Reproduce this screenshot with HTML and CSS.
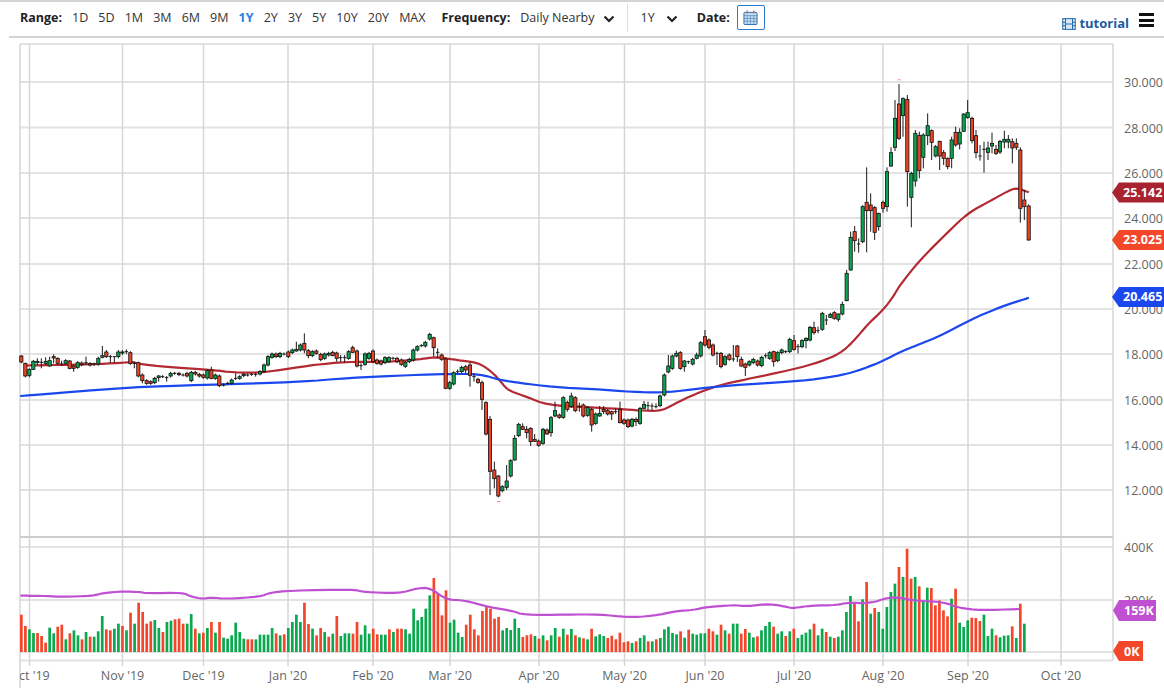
FILE: index.html
```html
<!DOCTYPE html>
<html lang="en">
<head>
<meta charset="utf-8">
<title>Chart</title>
<link rel="stylesheet" href="styles.css">
</head>
<body>
<header class="toolbar">
  <span class="lbl">Range:</span>
  <nav class="ranges">
    <a>1D</a><a>5D</a><a>1M</a><a>3M</a><a>6M</a><a>9M</a><a class="on">1Y</a><a>2Y</a><a>3Y</a><a>5Y</a><a>10Y</a><a>20Y</a><a>MAX</a>
  </nav>
  <span class="lbl freq">Frequency:</span>
  <span class="sel">Daily Nearby</span>
  <svg class="chev" viewBox="0 0 12 8"><path d="M1.5 1.5 6 6l4.5-4.5"/></svg>
  <span class="sep"></span>
  <span class="sel">1Y</span>
  <svg class="chev chev2" viewBox="0 0 12 8"><path d="M1.5 1.5 6 6l4.5-4.5"/></svg>
  <span class="lbl date">Date:</span>
  <button class="cal" type="button" aria-label="Pick date">
    <svg viewBox="0 0 16 17" class="calicon">
      <rect class="calbg" x="1" y="3" width="14" height="13"/>
      <path class="calgrid" d="M1 6.5h14M1 9.5h14M1 12.5h14M4.5 6v10M8 6v10M11.500 6v10"/>
      <rect class="calout" x="1" y="3" width="14" height="13" rx="1"/>
      <path class="calring" d="M4.500 1v3.500M11.500 1v3.500"/>
    </svg>
  </button>
  <span class="tools">
    <a class="tutorial">
      <svg class="film" viewBox="0 0 15 13"><rect x=".7" y=".7" width="13.600" height="11.600"/><path d="M3.700 .7v11.600M11.300 .7v11.600M.7 4.500h3M.7 8.500h3M11.300 4.500h3M11.300 8.500h3M3.700 6.500h7.600"/></svg>
      <span>tutorial</span>
    </a>
    <span class="burger"><i></i><i></i><i></i></span>
  </span>
</header>
<main class="chartwrap">
<svg class="chart" viewBox="0 38 1164 662" width="1164" height="662">
  <defs>
    <clipPath id="axisclip"><rect x="20" y="662" width="1100" height="30"/></clipPath>
  </defs>
  <g class="hgrid">
    <path d="M20 44H1113M20 82H1113M20 127.500H1113M20 173H1113M20 218H1113M20 264H1113M20 309H1113M20 354H1113M20 400H1113M20 445H1113M20 490H1113M20 547H1113M20 600H1113M20 652H1113M20 660.500H1113"/>
  </g>
  <g class="vgrid">
    <path d="M20 44V688M29.500 44V666M122.500 44V666M203.500 44V666M288 44V666M373 44V666M450 44V666M539 44V666M624.500 44V666M705 44V666M794 44V666M883 44V666M968 44V666M1061 44V666M1113 44V660"/>
  </g>
  <path class="sepline" d="M20 537H1113"/>
  <g id="vol"></g>
  <polyline id="mavol" class="ma purple"/>
  <polyline id="ma50" class="ma red"/>
  <polyline id="ma200" class="ma blue"/>
  <g id="candles"></g>
  <path class="tick" d="M897.800 80.500l1.500-1.500 1.500 1.500M497 501.500h3.500"/>
  <g class="yaxis">
    <text x="1124" y="87">30.000</text>
    <text x="1124" y="132.500">28.000</text>
    <text x="1124" y="178">26.000</text>
    <text x="1124" y="223">24.000</text>
    <text x="1124" y="269">22.000</text>
    <text x="1124" y="314">20.000</text>
    <text x="1124" y="359">18.000</text>
    <text x="1124" y="405">16.000</text>
    <text x="1124" y="450">14.000</text>
    <text x="1124" y="495">12.000</text>
    <text x="1124" y="552">400K</text>
    <text x="1124" y="605">200K</text>
  </g>
  <g class="xaxis" clip-path="url(#axisclip)">
    <text x="29.500" y="680">Oct '19</text>
    <text x="122.500" y="680">Nov '19</text>
    <text x="203.500" y="680">Dec '19</text>
    <text x="288" y="680">Jan '20</text>
    <text x="373" y="680">Feb '20</text>
    <text x="450" y="680">Mar '20</text>
    <text x="539" y="680">Apr '20</text>
    <text x="624.500" y="680">May '20</text>
    <text x="705" y="680">Jun '20</text>
    <text x="794" y="680">Jul '20</text>
    <text x="883" y="680">Aug '20</text>
    <text x="968" y="680">Sep '20</text>
    <text x="1061" y="680">Oct '20</text>
  </g>
  <g class="tags">
    <path class="t-red" d="M1112 192.500l7-10h45v20h-45z"/>
    <text x="1123" y="196.500">25.142</text>
    <path class="t-orange" d="M1112 240l7-10h45v20h-45z"/>
    <text x="1123" y="244">23.025</text>
    <path class="t-blue" d="M1112 297l7-10h45v20h-45z"/>
    <text x="1123" y="301">20.465</text>
    <path class="t-purple" d="M1113 610.500l6-10.500h37v21h-37z"/>
    <text x="1124" y="614.500">159K</text>
    <path class="t-orange" d="M1113 651l6-10h24v20h-24z"/>
    <text x="1124" y="655.500">0K</text>
  </g>
</svg>
</main>
<script src="chart.js"></script>
</body>
</html>
```
FILE: styles.css
```css
* { box-sizing: border-box; }
html, body { margin: 0; padding: 0; background: #fff; }
body { width: 1164px; height: 700px; overflow: hidden; font-family: "Open Sans", "Liberation Sans", sans-serif; color: #333; }

.toolbar {
  display: flex; align-items: center;
  height: 38px; margin-left: 9px; padding: 0 0 1px 11px;
  font-size: 12.5px; line-height: 17px;
  border-bottom: 2px solid #d4d4d4;
  position: relative;
}
.toolbar::before { content: ""; position: absolute; left: -9px; right: 0; top: 0; height: 2px; background: #d4d4d4; }
.lbl { font-weight: 700; color: #222; }
.ranges { display: flex; gap: 10.100px; margin-left: 10px; }
.ranges a { color: #333; }
.ranges a.on { color: #2b7fe0; font-weight: 700; }
.freq { margin-left: 16px; }
.sel { margin-left: 9px; color: #333; }
.freq + .sel { margin-left: 10px; }
.chev { width: 12px; height: 8px; margin-left: 9px; margin-top: 3px; fill: none; stroke: #222; stroke-width: 2.200; }
.sep { width: 1px; height: 28px; background: #ddd; margin-left: 12px; margin-right: 3px; }
.chev2 { margin-left: 11px; }
.date { margin-left: 19px; }
.cal { width: 28px; height: 25px; margin-left: 7px; padding: 0; background: #fff; border: 1px solid #2b7bd0; border-radius: 2px; display: flex; align-items: center; justify-content: center; }
.calicon { width: 15px; height: 17px; }
.calbg { fill: #c8dcef; }
.calgrid { fill: none; stroke: #5a8fc6; stroke-width: .8; }
.calout { fill: none; stroke: #2a66a8; stroke-width: 1; }
.calring { fill: none; stroke: #c96a55; stroke-width: 1.400; }

.tools { margin-left: auto; display: flex; align-items: flex-start; align-self: flex-start; padding-top: 12px; padding-right: 10px; }
.tutorial { display: flex; align-items: center; gap: 3px; margin-top: 3px; color: #1c5b9e; font-weight: 700; font-size: 13px; line-height: 17px; }
.film { width: 14px; height: 12px; fill: #dce8f4; stroke: #2468ad; stroke-width: 1.100; }
.burger { display: flex; flex-direction: column; gap: 2.500px; width: 15px; margin-left: 10px; margin-top: 1px; }
.burger i { display: block; height: 3px; background: #111; }

.chartwrap { display: block; }
.chart { display: block; }
.hgrid path { fill: none; stroke: #e2e2e2; stroke-width: 2; }
.vgrid path { fill: none; stroke: #d6d6d6; stroke-width: 1.500; }
.sepline { fill: none; stroke: #cdcdcd; stroke-width: 2; }
.ma { fill: none; stroke-width: 2.200; stroke-linejoin: round; stroke-linecap: round; }
.ma.red { stroke: #b32a33; }
.ma.blue { stroke: #1b48ee; }
.ma.purple { stroke: #bf50d2; }
.vg { fill: #0aa84f; }
.vr { fill: #f4462b; }
.wick { stroke: #1a1a1a; stroke-width: 1; fill: none; }
.bg { fill: #0aa550; stroke: #111; stroke-width: .8; }
.br { fill: #ec4226; stroke: #111; stroke-width: .8; }
.tick { fill: none; stroke: #f4665a; stroke-width: .8; }
.yaxis text { font: 12.500px "Open Sans", sans-serif; fill: #666; }
.xaxis text { font: 12.500px "Open Sans", sans-serif; fill: #666; text-anchor: middle; }
.tags text { font: 700 12.500px "Open Sans", sans-serif; fill: #fff; }
.t-red { fill: #a8232f; }
.t-orange { fill: #f3472a; }
.t-blue { fill: #1b48ee; }
.t-purple { fill: #bf50d2; }
```
FILE: chart.js
```js
(function () {
  var NS = 'http://www.w3.org/2000/svg';
  function add(parent, tag, attrs) {
    var e = document.createElementNS(NS, tag);
    for (var k in attrs) e.setAttribute(k, attrs[k]);
    parent.appendChild(e);
    return e;
  }

  var vols =
    'R112 R78 G68 G57 R57 R48 R28 G73 G56 R76 R82 G38 R56 G65 G50 R38 G60 R46 G46 G62 G108 R68 R65 G70 G85 R78 G65 R118 G85 R148 R120 R85 R92 G96 G72 R60 G90 G94 R98 R100 R85 G85 G114 R70 G56 R58 G72 R90 G58 R90 G43 G40 G50 G88 G60 G40 R38 R38 G38 G52 G52 G52 G72 R56 G50 R53 G72 G90 G112 G90 R148 R84 G70 R50 R72 G60 R46 G55 R108 G48 G56 G56 R55 R90 G52 G80 G55 R70 R53 G52 G52 R68 G60 R70 ' +
    'R70 G68 G55 G130 G95 G105 G130 G170 R222 R175 R110 R185 G88 G97 G58 G45 R82 R112 R68 R50 R123 R135 R130 R100 R105 G65 G72 G66 G100 G72 R45 R50 R53 G48 R40 G50 R35 G50 G72 R46 G70 R52 G69 R50 G44 R41 G38 R70 G47 G53 G48 R42 R49 R38 R58 R29 R32 G27 R32 G42 G50 R32 G32 R38 G42 G68 G76 G57 G53 R62 G43 R67 G55 G52 G56 G56 R70 R62 G52 R82 G65 R55 G85 G85 R55 R69 G58 G44 R47 G65 G78 G90 R76 G55 G62 R48 G62 R70 G42 ' +
    'G52 G58 G68 R85 G50 G70 R60 G46 R42 G46 G65 G120 G168 R150 R92 G158 R210 G115 R132 G120 G70 G135 G180 G205 R255 G225 R310 R220 G225 R197 G155 G193 R192 R140 R155 R125 R107 G160 R190 G88 G75 G95 R103 R102 R93 G112 G48 G70 R50 G44 G49 G50 R77 G42 R145 G85';
  var vl = vols.split(' ');
  var vg = document.getElementById('vol');
  vl.forEach(function (s, i) {
    var h = parseInt(s.slice(1), 10) / 3;
    var x = 21.3 + i * (1003 / (vl.length - 1));
    add(vg, 'rect', { x: (x - 1.3).toFixed(2), y: (652 - h).toFixed(2), width: 2.7, height: h.toFixed(2), 'class': s[0] === 'G' ? 'vg' : 'vr' });
  });

  // Each candle: zoomX colour top bottom [high low], in crop units of 1/3 px.
  var sections = [
    [0, 340, '64 R 48 66 45 70,76 R 70 108 68 112,88 G 88 106 85 112,100 G 64 88 60 90,112 G 64 68 55 75,124 D 67 67 55 85,137 G 64 70 52 75,149 G 62 78 50 80,161 R 50 54 43 70,173 R 55 70 52 75,185 D 72 72 62 78,197 G 62 70,209 R 63 85 60 88,221 R 78 85 76 95,233 G 68 82,245 R 69 74,258 D 68 68 50 75,270 R 71 75,282 D 72 72 68 78,295 G 55 72,307 G 47 52 18 55,319 R 36 50 30 54,331 D 50 50 45 68,343 D 50 50 48 68,355 G 36 50 30 55,367 G 36 38 30 45,379 D 35 35 28 42,391 R 38 70,403 D 70 70 65 85,415 R 68 108 65 112,427 R 105 122 100 130,440 R 122 130,452 R 125 130,464 G 115 128,476 G 108 113 105 125,488 D 110 110,500 D 113 113 108 125,512 G 100 108,524 D 100 100,537 R 100 104,549 D 105 105,561 R 100 108,574 G 97 122,586 R 97 102,598 R 103 108,610 R 105 112,622 G 92 114,634 R 90 115 80 118,646 G 105 115,658 R 108 137,671 D 135 135,683 D 130 130,695 G 120 130,707 D 115 115 100 120,719 G 110 115,731 G 103 107,743 D 105 105,755 D 103 103,767 D 103 103 98 110,780 G 95 102,792 G 75 95,804 G 50 75,816 G 42 52,828 R 42 50,840 G 40 50,852 D 42 42,865 R 36 50,877 G 30 38,889 G 28 33 5 35'],
    [280, 325, '61 G 60 75,73 R 55 75 25 85,85 R 77 92 72 100,97 G 80 92,109 R 78 85,122 R 88 104,134 G 87 100,146 G 85 90,158 R 82 92 77 94,170 R 84 100 80 110,182 D 98 98 90 110,194 D 98 98 90 112,206 G 80 100,218 R 68 82 62 84,231 R 78 123,243 D 122 122 115 135,255 G 87 118,267 G 85 100,279 R 78 110,291 R 105 115,303 R 108 117,315 G 98 113,327 G 98 110,339 D 100 100,351 R 100 110,364 R 105 118,376 G 112 124,388 G 103 110,400 G 75 105,412 G 65 75,424 D 62 62,436 G 52 63,449 G 28 42,461 R 38 68 35 95,473 D 82 82 70 100,485 R 90 103,497 R 102 190 98 193'],
    [420, 340, '89 G 128 145,101 G 98 132,113 D 95 95 88 102,125 G 82 95,137 R 80 90 75 100,150 R 75 106 68 140,162 D 110 110 100 125,174 R 118 127,186 R 128 178 122 210,198 R 188 282,210 R 238 394 228 465,223 R 390 416 365 445,235 R 408 468 405 472,247 G 440 452,260 G 423 442 375 450,272 G 362 408,284 G 295 360 285 362,296 G 253 287,308 R 260 268 250 270,320 R 268 278 258 295,332 R 265 305 262 318,344 R 298 304 282 306,356 R 303 316,369 G 268 310,381 R 270 282 265 284,393 G 233 278 228 290,405 G 212 228 185 232,418 R 225 232,430 G 173 232,442 R 187 208 182 215,454 G 168 200 158 204,466 R 173 212,478 D 200 200 188 215,490 R 195 228,503 G 203 226,515 R 208 255 204 275,527 G 222 250,539 G 220 228 198 230,551 R 208 215 198 222,563 R 212 222,575 R 215 222 212 240,587 D 215 215 205 222,600 R 208 248 185 250,612 R 240 250,624 R 240 260,636 G 238 258,648 R 238 245 232 258,660 G 205 250,672 G 193 205 183 208,684 D 197 197 185 210,696 D 198 198 190 210,708 D 200 200 190 205,720 G 168 197,733 G 105 165,745 G 78 96 45 100,757 G 48 85,769 G 40 48 32 52,781 R 38 85,793 G 63 80 60 95,805 D 65 65 62 72,818 G 58 72,830 G 45 55 38 58,842 G 8 48,855 R -10 15 -30 20,867 R 0 22 -5 28,879 R 15 45,891 D 40 40 35 75'],
    [720, 190, '3 R 490 530 486 535,15 G 500 523,28 R 495 508,40 D 507 507 465 515,52 R 468 500 465 516,64 R 508 528 500 530,76 R 522 532 518 558,88 G 515 525,100 G 508 518,113 R 513 525,125 G 502 527,137 D 497 497 490 505,149 G 488 505,161 R 485 515 482 530,173 G 488 512,185 G 480 488,197 D 485 485,209 G 448 485,222 R 452 478 435 482,234 D 470 470 462 490,246 G 452 470,258 G 445 452 442 475,270 G 412 450,282 R 413 428 395 434,294 D 422 422 410 430,307 G 370 418,319 D 390 390 375 405,331 G 373 382 368 384,343 R 368 385,355 G 372 388 370 395,367 G 343 372 335 376,380 G 250 332 240 334,392 G 142 240 125 242,404 R 125 152 108 185,416 D 162 162 145 188'],
    [860, 70, '8 G 410 515,20 R 397 422 292 547,32 R 405 422 370 485,44 R 413 487 408 510,56 G 430 470 428 482,69 R 397 415 392 428,81 G 305 410 292 425,93 G 248 288 232 290,105 G 145 232 90 243,117 R 102 205 42 210,129 G 86 137 82 200,142 R 88 305 75 410,154 G 310 382 305 472,166 G 190 333 180 350,178 R 196 302 185 325,190 G 195 262 190 295,203 G 167 197 130 225,215 R 182 217 178 270,227 G 230 258 225 262,239 R 214 258 212 300,251 R 248 265 240 285,263 R 265 290 262 298,275 G 210 265 200 295,287 R 187 225 170 230,299 G 187 222 175 238,311 G 132 184 130 186,323 G 128 143 90 146,336 R 145 212 140 220,348 R 197 248 180 265,360 D 258 258 225 272,372 D 238 238 215 308,384 G 234 247 215 270,396 G 220 228 188 250,408 R 238 250 225 255,420 G 214 246 210 252,433 G 208 216 182 235,445 G 208 216 195 235,457 R 215 234 205 280,469 R 220 232 205 240,481 R 240 415 232 458,493 R 390 410 360 450,506 R 408 510 403 512']
  ];
  var cg = document.getElementById('candles');
  sections.forEach(function (sec) {
    sec[2].split(',').forEach(function (row) {
      var p = row.split(' ');
      var x = sec[0] + (+p[0]) / 3;
      var t = sec[1] + (+p[2]) / 3, b = sec[1] + (+p[3]) / 3;
      var hi = p[4] !== undefined ? sec[1] + (+p[4]) / 3 : t - 1.5;
      var lo = p[5] !== undefined ? sec[1] + (+p[5]) / 3 : b + 1.5;
      add(cg, 'line', { x1: x.toFixed(2), x2: x.toFixed(2), y1: hi.toFixed(2), y2: lo.toFixed(2), 'class': 'wick' });
      if (p[1] === 'D') {
        add(cg, 'line', { x1: (x - 1.7).toFixed(2), x2: (x + 1.7).toFixed(2), y1: t.toFixed(2), y2: t.toFixed(2), 'class': 'wick' });
      } else {
        add(cg, 'rect', { x: (x - 1.6).toFixed(2), y: t.toFixed(2), width: 3.2, height: Math.max(b - t, 1).toFixed(2), 'class': p[1] === 'G' ? 'bg' : 'br' });
      }
    });
  });

  // Corner-cutting so the moving averages bend smoothly between read-off points.
  function smooth(arr, rounds) {
    for (var r = 0; r < rounds; r++) {
      var out = [arr[0]];
      for (var i = 0; i < arr.length - 1; i++) {
        var a = arr[i], b = arr[i + 1];
        out.push([a[0] * .75 + b[0] * .25, a[1] * .75 + b[1] * .25]);
        out.push([a[0] * .25 + b[0] * .75, a[1] * .25 + b[1] * .75]);
      }
      out.push(arr[arr.length - 1]);
      arr = out;
    }
    return arr;
  }
  function pts(id, arr) {
    document.getElementById(id).setAttribute('points', smooth(arr, 2).map(function (q) { return (+q[0]).toFixed(1) + ',' + (+q[1]).toFixed(1); }).join(' '));
  }
  pts('ma50', [[25,365.5],[60,365],[100,364],[125,362.5],[133,362],[139,364],[167,367],[213,370],[233,372.5],[260,372.7],[280,370],[300,367],[313,365],[347,361.7],[380,362],[413,360],[425,358.5],[437,357],[453,359.500],[470,361.500],[480,364],[488,369],[497,377],[505,387],[510,391],[527,397],[547,405],[587,407],[620,409],[640,410.5],[660,411],[670,406.500],[680,401],[700,392],[720,385],[743,380],[793,369.500],[820,362],[840,353.500],[853,342],[867,325],[883,310],[893,297],[900,285],[920,260],[947,233],[968,213],[990,201],[1010,190],[1017,188],[1028,192]]);
  pts('ma200', [[21,396],[133,387],[200,385],[300,382],[347,378],[413,375],[447,374],[480,374],[500,380],[520,383],[553,387],[593,389],[633,392],[660,392.5],[680,391],[720,386],[770,383],[810,380],[843,375],[863,369],[885,360],[900,352],[920,344],[940,336],[970,320],[1000,307],[1028,298]]);
  var pv = [];
  [[0,[[64,197],[140,198],[190,201],[280,197],[310,189],[370,184],[420,186],[440,190],[550,188],[570,199],[610,207],[630,202],[680,207],[780,200],[810,188],[870,182],[1060,178],[1090,186],[1199,190]]],
   [400,[[50,175],[90,173],[140,210],[190,210],[270,232],[340,243],[370,255],[500,254],[600,253],[680,262],[760,258],[830,243],[880,240],[920,231],[1000,225],[1040,229],[1110,221],[1170,233]]],
   [764,[[90,234],[140,227],[220,225],[250,218],[320,220],[370,203],[410,203],[440,211],[540,216],[580,233],[650,241],[765,237]]]
  ].forEach(function (s) {
    s[1].forEach(function (q) { pv.push([s[0] + q[0] / 3, 530 + q[1] / 3]); });
  });
  pts('mavol', pv);
})();
```
